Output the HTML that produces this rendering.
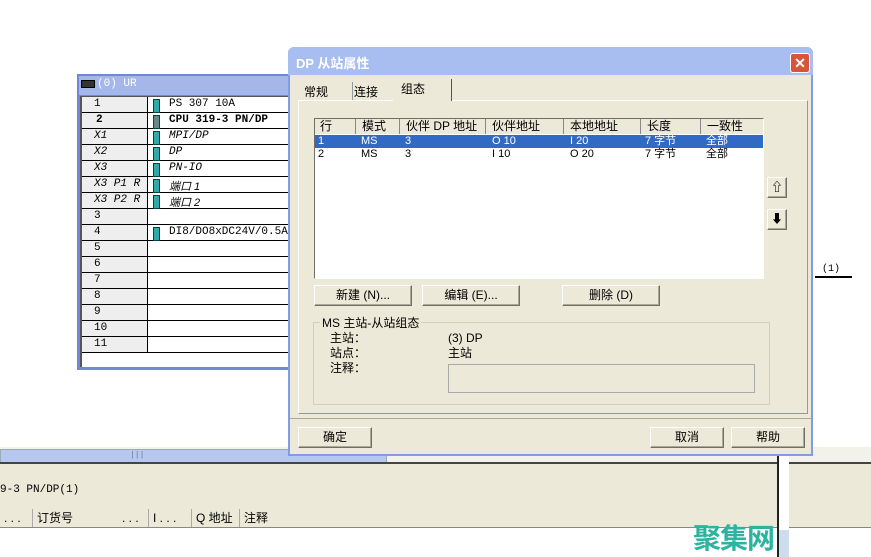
<!DOCTYPE html>
<html><head><meta charset="utf-8"><style>
body{margin:0;width:871px;height:557px;background:#fff;position:relative;overflow:hidden;font-family:"Liberation Mono","Noto Sans CJK SC",monospace;font-size:11px;color:#000}
.a{position:absolute}
.btn{position:absolute;background:#ece9d8;border:1px solid;border-color:#fff #716f64 #716f64 #fff;box-shadow:inset -1px -1px 0 #aca899;text-align:center;line-height:19px;font-size:12px;font-family:"Liberation Sans","Noto Sans CJK SC",sans-serif}
.cjk{font-family:"Liberation Sans","Noto Sans CJK SC",sans-serif}
.rrow{position:absolute;left:0;width:210px;height:15px;border-bottom:1px solid #000}
.rrow .c1{position:absolute;left:6px;top:1px}
.rrow .c2{position:absolute;left:87px;top:1px;font-style:italic}
.mod{position:absolute;left:71px;top:2px;width:5px;height:12px;background:#3aa;border:1px solid #044}
</style></head><body>
<!-- bottom area -->
<div class="a" style="left:0;top:447px;width:871px;height:16px;background:#f2f1ea"></div>
<div class="a" style="left:0;top:449px;width:385px;height:12px;background:#b6c8f0;border:1px solid #9ab"></div>
<div class="a" style="left:130px;top:451px;font-size:8px;color:#678">|||</div>
<div class="a" style="left:0;top:462px;width:871px;height:68px;background:#ece9d8;border-top:2px solid #444"></div>
<div class="a" style="left:0;top:484px;font-size:11px">9-3 PN/DP(1)</div>
<div class="a cjk" style="left:0;top:509px;width:871px;height:18px;border-bottom:1px solid #888;font-size:12px;line-height:18px">
<span class="a" style="left:4px">. . .</span><span class="a" style="left:32px;border-left:1px solid #aaa;padding-left:4px">订货号</span><span class="a" style="left:122px">. . .</span><span class="a" style="left:148px;border-left:1px solid #aaa;padding-left:4px">I . . .</span><span class="a" style="left:191px;border-left:1px solid #aaa;padding-left:4px">Q 地址</span><span class="a" style="left:239px;border-left:1px solid #aaa;padding-left:4px">注释</span></div>
<div class="a" style="left:0;top:528px;width:871px;height:29px;background:#fff"></div>
<div class="a" style="left:777px;top:456px;width:2px;height:101px;background:#222"></div>
<div class="a" style="left:779px;top:456px;width:10px;height:101px;background:#fff"></div>
<div class="a" style="left:779px;top:530px;width:10px;height:27px;background:#cde"></div>
<div class="a cjk" style="left:693px;top:517px;font-size:28px;font-weight:bold;color:#2bb5a0;letter-spacing:-1px">聚集网</div>
<div class="a" style="left:822px;top:264px;font-size:10px">(1)</div>
<div class="a" style="left:815px;top:276px;width:37px;height:2px;background:#000"></div>
<!-- rack -->
<div class="a" style="left:77px;top:74px;width:214px;height:296px;background:#7088d8">
<div class="a" style="left:2px;top:2px;width:210px;height:19px;background:#a4b6ea"></div>
<div class="a" style="left:4px;top:6px;width:12px;height:6px;background:#333;border:1px solid #000"></div>
<div class="a" style="left:20px;top:4px;color:#fff;font-size:11px">(0) UR</div>
<div class="a" style="left:3px;top:22px;width:210px;height:270px;background:#fff;border-left:2px solid #555;border-top:1px solid #555">
<div class="a" style="left:0;top:0;width:65px;height:256px;background:#eee;border-right:1px solid #000"></div>
<div class="rrow" style="top:0"><span class="c1" style="left:12px">1</span><span class="mod"></span><span class="c2" style="font-style:normal">PS 307 10A</span></div>
<div class="rrow" style="top:16px"><span class="c1" style="font-weight:bold;left:14px">2</span><span class="mod" style="background:#688"></span><span class="c2" style="font-style:normal;font-weight:bold">CPU 319-3 PN/DP</span></div>
<div class="rrow" style="top:32px"><span class="c1" style="font-style:italic;left:12px">X1</span><span class="mod"></span><span class="c2">MPI/DP</span></div>
<div class="rrow" style="top:48px"><span class="c1" style="font-style:italic;left:12px">X2</span><span class="mod"></span><span class="c2">DP</span></div>
<div class="rrow" style="top:64px"><span class="c1" style="font-style:italic;left:12px">X3</span><span class="mod"></span><span class="c2">PN-IO</span></div>
<div class="rrow" style="top:80px"><span class="c1" style="font-style:italic;left:12px">X3 P1 R</span><span class="mod"></span><span class="c2 cjk">端口 1</span></div>
<div class="rrow" style="top:96px"><span class="c1" style="font-style:italic;left:12px">X3 P2 R</span><span class="mod"></span><span class="c2 cjk">端口 2</span></div>
<div class="rrow" style="top:112px"><span class="c1" style="left:12px">3</span></div>
<div class="rrow" style="top:128px"><span class="c1" style="left:12px">4</span><span class="mod"></span><span class="c2" style="font-style:normal">DI8/DO8xDC24V/0.5A</span></div>
<div class="rrow" style="top:144px"><span class="c1" style="left:12px">5</span></div>
<div class="rrow" style="top:160px"><span class="c1" style="left:12px">6</span></div>
<div class="rrow" style="top:176px"><span class="c1" style="left:12px">7</span></div>
<div class="rrow" style="top:192px"><span class="c1" style="left:12px">8</span></div>
<div class="rrow" style="top:208px"><span class="c1" style="left:12px">9</span></div>
<div class="rrow" style="top:224px"><span class="c1" style="left:12px">10</span></div>
<div class="rrow" style="top:240px"><span class="c1" style="left:12px">11</span></div>
</div></div>
<!-- dialog -->
<div class="a cjk" style="left:288px;top:47px;width:521px;height:407px;background:#ece9d8;border:2px solid #7f9de4;border-top:none;border-radius:6px 6px 0 0">
<div class="a" style="left:-2px;top:0;width:525px;height:28px;background:#a8bdf0;border-radius:6px 6px 0 0"></div>
<div class="a" style="left:6px;top:6px;color:#fff;font-weight:bold;font-size:13px">DP 从站属性</div>
<div class="a" style="left:500px;top:6px;width:18px;height:18px;background:#d8553a;border:1px solid #fff;border-radius:3px;color:#fff;font-weight:bold;text-align:center;line-height:18px;font-size:14px">✕</div>
<div class="a" style="left:8px;top:53px;width:508px;height:312px;border:1px solid;border-color:#fff #919b9c #919b9c #fff"></div>
<div class="a" style="left:8px;top:35px;width:48px;height:18px;border-right:1px solid #919b9c;font-size:12px;line-height:20px;padding-left:6px">常规</div>
<div class="a" style="left:58px;top:35px;width:44px;height:18px;border-right:1px solid #919b9c;font-size:12px;line-height:20px;padding-left:6px">连接</div>
<div class="a" style="left:103px;top:32px;width:50px;height:22px;background:#ece9d8;border-right:1px solid #555;font-size:12px;line-height:20px;padding-left:8px">组态</div>
<div class="a" style="left:24px;top:71px;width:448px;height:159px;background:#fff;border:1px solid;border-color:#716f64 #fff #fff #716f64">
<div class="a" style="left:0;top:0;width:448px;height:15px;background:#ece9d8;font-size:12px;line-height:15px">
<span class="a" style="left:5px">行</span><span class="a" style="left:40px;border-left:1px solid #888;padding-left:6px">模式</span><span class="a" style="left:84px;border-left:1px solid #888;padding-left:6px">伙伴 DP 地址</span><span class="a" style="left:170px;border-left:1px solid #888;padding-left:6px">伙伴地址</span><span class="a" style="left:248px;border-left:1px solid #888;padding-left:6px">本地地址</span><span class="a" style="left:325px;border-left:1px solid #888;padding-left:6px">长度</span><span class="a" style="left:385px;border-left:1px solid #888;padding-left:6px">一致性</span></div>
<div class="a" style="left:0;top:16px;width:448px;height:13px;background:#316ac5;color:#fff;font-size:11px;line-height:13px">
<span class="a" style="left:3px">1</span><span class="a" style="left:46px">MS</span><span class="a" style="left:90px">3</span><span class="a" style="left:177px">O 10</span><span class="a" style="left:255px">I 20</span><span class="a" style="left:330px">7 字节</span><span class="a" style="left:391px">全部</span></div>
<div class="a" style="left:0;top:29px;width:448px;height:13px;font-size:11px;line-height:13px">
<span class="a" style="left:3px">2</span><span class="a" style="left:46px">MS</span><span class="a" style="left:90px">3</span><span class="a" style="left:177px">I 10</span><span class="a" style="left:255px">O 20</span><span class="a" style="left:330px">7 字节</span><span class="a" style="left:391px">全部</span></div>
</div>
<div class="btn" style="left:477px;top:130px;width:18px;height:19px;font-weight:bold">⇧</div>
<div class="btn" style="left:477px;top:162px;width:18px;height:19px;font-weight:bold">⬇</div>
<div class="btn" style="left:24px;top:238px;width:96px;height:19px">新建 (N)...</div>
<div class="btn" style="left:132px;top:238px;width:96px;height:19px">编辑 (E)...</div>
<div class="btn" style="left:272px;top:238px;width:96px;height:19px">删除 (D)</div>
<div class="a" style="left:23px;top:275px;width:455px;height:81px;border:1px solid #d0d0bf"></div>
<div class="a" style="left:30px;top:267px;background:#ece9d8;padding:0 2px;font-size:12px">MS 主站-从站组态</div>
<div class="a" style="left:40px;top:284px;font-size:12px;line-height:15px">主站：<br>站点：<br>注释：</div>
<div class="a" style="left:158px;top:284px;font-size:12px;line-height:15px">(3) DP<br>主站</div>
<div class="a" style="left:158px;top:317px;width:305px;height:27px;background:#ece9d8;border:1px solid #aaa"></div>
<div class="a" style="left:0;top:371px;width:521px;height:1px;background:#aca899"></div>
<div class="btn" style="left:8px;top:380px;width:72px;height:19px">确定</div>
<div class="btn" style="left:360px;top:380px;width:72px;height:19px">取消</div>
<div class="btn" style="left:441px;top:380px;width:72px;height:19px">帮助</div>
</div>
</body></html>
